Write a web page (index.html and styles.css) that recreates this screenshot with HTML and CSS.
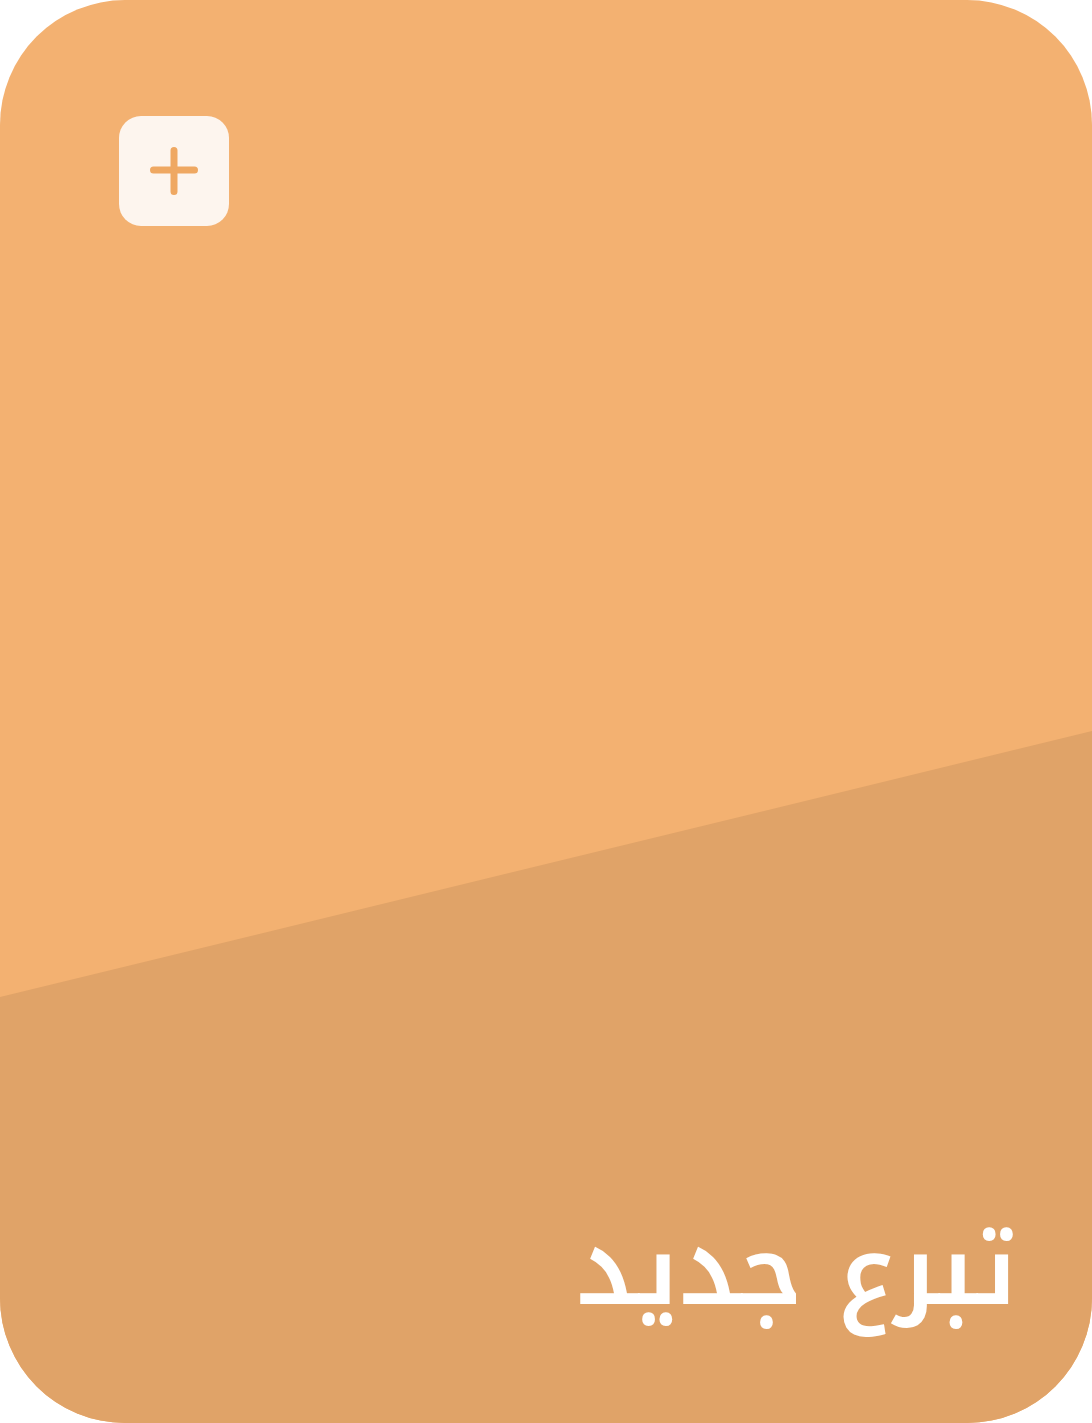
FILE: index.html
```html
<!DOCTYPE html>
<html lang="ar">
<head>
<meta charset="utf-8">
<link rel="stylesheet" href="styles.css">
</head>
<body>
<div class="card">
  <button class="add-btn" aria-label="add">
    <svg width="48" height="48" viewBox="0 0 48 48"><path d="M24 3.5V44.5M3.5 23H44.5" stroke="#EFA862" stroke-width="7" stroke-linecap="round" fill="none"/></svg>
  </button>
  <div class="title" dir="rtl">تبرع جديد</div>
</div>
</body>
</html>
```
FILE: styles.css
```css
html, body { margin: 0; padding: 0; background: #ffffff; }
.card {
  position: relative;
  width: 1092px;
  height: 1423px;
  box-sizing: border-box;
  border-radius: 125px;
  background: #F3B171;
  overflow: hidden;
  display: flex;
  flex-direction: column;
  padding: 116px 75px 102px 119px;
}
.card::before {
  content: "";
  position: absolute;
  inset: 0;
  background: #E0A368;
  clip-path: polygon(0 997px, 100% 731px, 100% 100%, 0 100%);
}
.add-btn {
  position: relative;
  width: 110px;
  height: 110px;
  border: none;
  padding: 0;
  border-radius: 22px;
  background: #FDF5EE;
  display: flex;
  align-items: center;
  justify-content: center;
  align-self: flex-start;
}
.title {
  position: relative;
  margin-top: auto;
  align-self: flex-end;
  font-family: "Noto Kufi Arabic", "DejaVu Sans", sans-serif;
  font-size: 101px;
  font-weight: 600;
  line-height: 1;
  color: #ffffff;
}
```
